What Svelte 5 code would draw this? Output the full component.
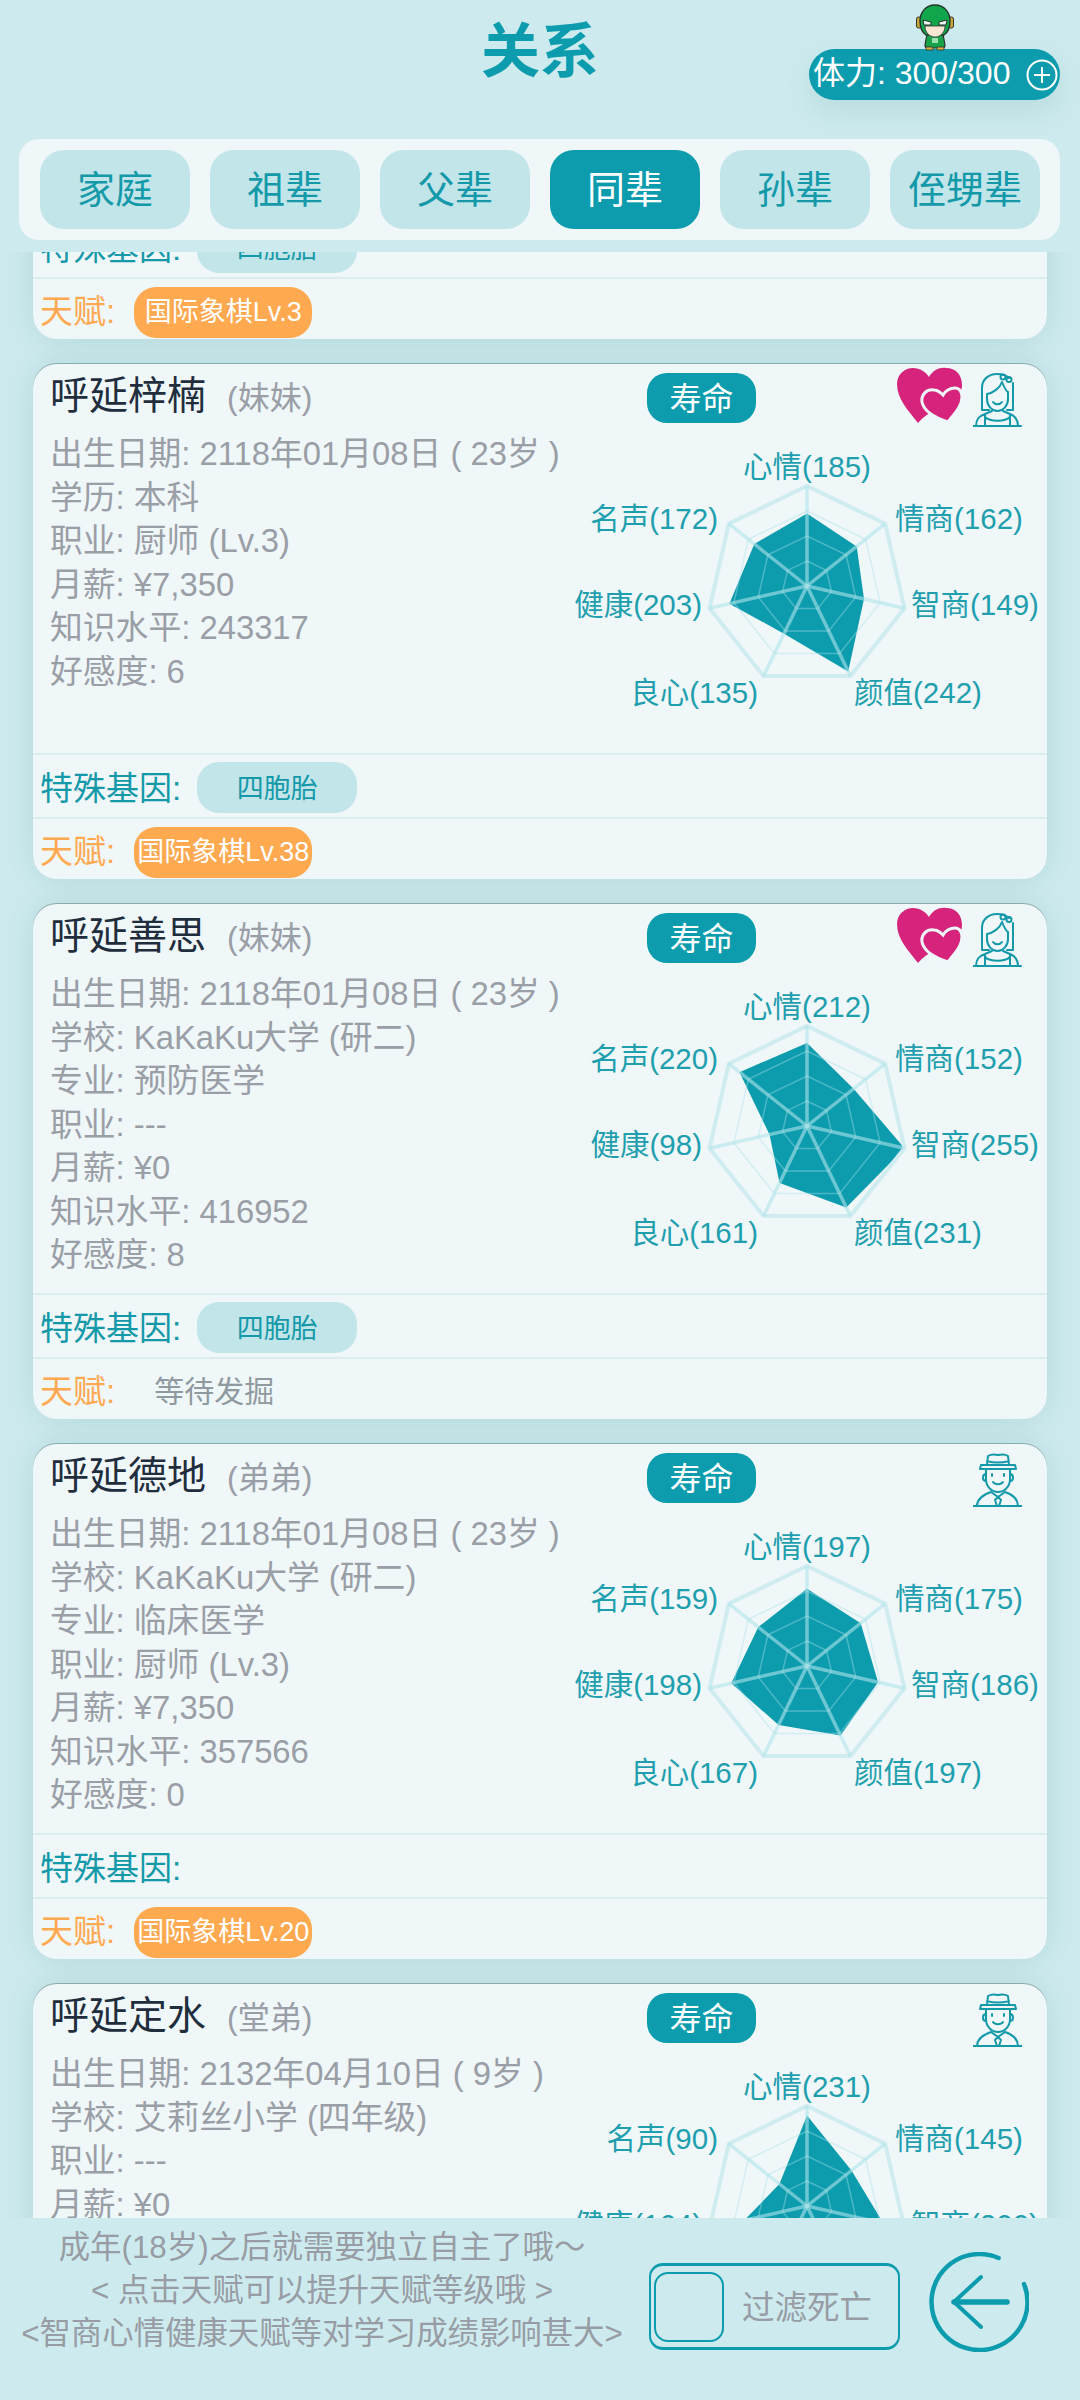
<script>
	const tabs = ['家庭', '祖辈', '父辈', '同辈', '孙辈', '侄甥辈'];
	const activeTab = '同辈';
	const tips = [
		'成年(18岁)之后就需要独立自主了哦～',
		'< 点击天赋可以提升天赋等级哦 >',
		'<智商心情健康天赋等对学习成绩影响甚大>'
	];

	// 雷达图: 顺时针七个属性, 标签位置相对 svg 左上角
	const R = 100;
	const CX = 247;
	const CY = 156;
	const axes = [
		{ key: '心情', x: 247, y: 38, anchor: 'middle' },
		{ key: '情商', x: 335, y: 90, anchor: 'start' },
		{ key: '智商', x: 351, y: 176, anchor: 'start' },
		{ key: '颜值', x: 294, y: 264, anchor: 'start' },
		{ key: '良心', x: 198, y: 264, anchor: 'end' },
		{ key: '健康', x: 142, y: 176, anchor: 'end' },
		{ key: '名声', x: 158, y: 90, anchor: 'end' }
	];

	function vertex(i, r) {
		const a = (i * 2 * Math.PI) / 7 - Math.PI / 2;
		return [CX + r * Math.cos(a), CY + r * Math.sin(a)];
	}

	function ring(scale) {
		return axes.map((_, i) => vertex(i, R * scale).map((n) => n.toFixed(1)).join(',')).join(' ');
	}

	function shape(values) {
		return values.map((v, i) => vertex(i, (v / 255) * R).map((n) => n.toFixed(1)).join(',')).join(' ');
	}

	const people = [
		{
			name: '',
			rel: '',
			lines: [],
			stats: null,
			icon: 'girl',
			married: false,
			gene: '四胞胎',
			talent: '国际象棋Lv.3'
		},
		{
			name: '呼延梓楠',
			rel: '(妹妹)',
			lines: [
				'出生日期: 2118年01月08日 ( 23岁 )',
				'学历: 本科',
				'职业: 厨师 (Lv.3)',
				'月薪: ¥7,350',
				'知识水平: 243317',
				'好感度: 6'
			],
			stats: [185, 162, 149, 242, 135, 203, 172],
			icon: 'girl',
			married: true,
			gene: '四胞胎',
			talent: '国际象棋Lv.38'
		},
		{
			name: '呼延善思',
			rel: '(妹妹)',
			lines: [
				'出生日期: 2118年01月08日 ( 23岁 )',
				'学校: KaKaKu大学 (研二)',
				'专业: 预防医学',
				'职业: ---',
				'月薪: ¥0',
				'知识水平: 416952',
				'好感度: 8'
			],
			stats: [212, 152, 255, 231, 161, 98, 220],
			icon: 'girl',
			married: true,
			gene: '四胞胎',
			talent: null
		},
		{
			name: '呼延德地',
			rel: '(弟弟)',
			lines: [
				'出生日期: 2118年01月08日 ( 23岁 )',
				'学校: KaKaKu大学 (研二)',
				'专业: 临床医学',
				'职业: 厨师 (Lv.3)',
				'月薪: ¥7,350',
				'知识水平: 357566',
				'好感度: 0'
			],
			stats: [197, 175, 186, 197, 167, 198, 159],
			icon: 'boy',
			married: false,
			gene: null,
			talent: '国际象棋Lv.20'
		},
		{
			name: '呼延定水',
			rel: '(堂弟)',
			lines: [
				'出生日期: 2132年04月10日 ( 9岁 )',
				'学校: 艾莉丝小学 (四年级)',
				'职业: ---',
				'月薪: ¥0'
			],
			stats: [231, 145, 200, 180, 120, 164, 90],
			icon: 'boy',
			married: false,
			gene: null,
			talent: null
		}
	];
</script>

<div class="page">
	<header class="top-bar">
		<h1>关系</h1>
		<div class="stamina">
			<svg class="mascot" width="38" height="47" viewBox="0 0 38 47">
				<rect x="0.5" y="13" width="5" height="11" rx="2" fill="#c9a93a" stroke="#333" stroke-width="1" />
				<rect x="32.5" y="13" width="5" height="11" rx="2" fill="#c9a93a" stroke="#333" stroke-width="1" />
				<path d="M11 30h16l2 11a3 3 0 0 1-3 3H12a3 3 0 0 1-3-3z" fill="#16a34a" stroke="#27332b" stroke-width="1.2" />
				<rect x="16" y="34" width="6" height="5" fill="#9ee0b0" />
				<path d="M10 43h7v3h-7zM21 43h7v3h-7z" fill="#d8b13a" stroke="#333" stroke-width="0.8" />
				<path d="M19 1C10 1 4 8 4 17c0 7 3 12 6 14h18c3-2 6-7 6-14 0-9-6-16-15-16z" fill="#12a64c" stroke="#26332b" stroke-width="1.4" />
				<path d="M9 22h20c0 6-4 11-10 11S9 28 9 22z" fill="#fbe6d2" stroke="#333" stroke-width="0.8" />
				<path d="M7 16l8 2v3H8zM31 16l-8 2v3h7z" fill="#eef5ee" stroke="#26332b" stroke-width="1" />
			</svg>
			<span class="stamina-text">体力: 300/300</span>
			<svg width="32" height="32" viewBox="0 0 32 32" fill="none" stroke="#fff">
				<circle cx="16" cy="16" r="14.5" stroke-width="2" />
				<path d="M16 8v16M8 16h16" stroke-width="2" />
			</svg>
		</div>
	</header>

	<nav class="tabs">
		{#each tabs as tab}
			<button class="tab" class:active={tab === activeTab}>{tab}</button>
		{/each}
	</nav>

	<main class="list">
		<div class="stack">
			{#each people as p}
				<article class="card">
					<div class="upper">
						<div class="head">
							<div class="who">
								<span class="name">{p.name}</span>
								<span class="rel">{p.rel}</span>
							</div>
							<button class="life">寿命</button>
							<div class="icons">
								{#if p.married}
									<svg class="hearts" width="65" height="56" viewBox="0 0 65 56">
										<path d="M21 56C11 43 0 32 0 17 0 7 8 1 16 1c7 0 13 4 16 9 4-7 11-10 17-9 10 0 16 7 16 17 0 12-13 18-25 24-8 4-14 8-19 14z" fill="#d6247c" />
										<path d="M51 55C42 52 27 46 25 35c-1-8 5-13 12-12 4 0 7 3 9 5 2-4 7-7 12-7 5 0 7 5 7 9 0 10-9 18-14 25z" fill="#d6247c" stroke="#eef7f9" stroke-width="3" />
									</svg>
								{/if}
								<svg class="person" width="49" height="54" viewBox="0 0 49 54" fill="none" stroke="#1499a9" stroke-width="2" stroke-linecap="round" stroke-linejoin="round">
									{#if p.icon === 'girl'}
										<path d="M9 37V15C9 6 16 1 24 1c5 0 9 1 12 4M40 10v27M9 37h7M40 37h-6" />
										<path d="M14 21c6-1 13-6 15-12 2 5 4 9 6 10v7c0 7-5 12-10.500 12S14 33 14 26z" />
										<path d="M20 29c2 3 7 3 9 0" />
										<circle cx="30" cy="4" r="2.500" />
										<circle cx="36" cy="6.500" r="2.500" />
										<path d="M0 53h48M3 53c0-7 3-10 9-12l7-3M45 53c0-7-3-10-8-12l-7-3M12 41v12M37 41v12M12 44c5 5 20 5 25 0" />
									{:else}
										<path d="M14 12l1-9c3-2 6-2 10-1 4-1 7-1 10 1l1 9M8 12h34l1 4H7zM14 8c7 2 15 2 22 0" />
										<path d="M13 17v9c0 8 6 13 12 13s12-5 12-13v-9M13 21c-4 0-4 7 0 7M37 21c4 0 4 7 0 7" />
										<path d="M20 29c2 3 8 3 10 0M19 21v2M31 21v2" />
										<path d="M0 53h49M4 53c0-7 5-11 14-14l7 5 7-5c9 3 13 7 13 14M25 44l-3 3 2 6M25 44l3 3-2 6" />
									{/if}
								</svg>
							</div>
						</div>
						<div class="body">
							<div class="info">
								{#each p.lines as line}
									<p>{line}</p>
								{/each}
							</div>
							{#if p.stats}
								<svg class="radar" width="487" height="300" viewBox="0 0 487 300">
									<polygon class="fill" points={shape(p.stats)} />
									{#each [0.25, 0.5, 0.75] as s}
										<polygon class="ring" points={ring(s)} />
									{/each}
									<polygon class="ring outer" points={ring(1)} />
									{#each axes as _, i}
										<line class="spoke" x1={CX} y1={CY} x2={vertex(i, R)[0]} y2={vertex(i, R)[1]} />
									{/each}
									{#each axes as a, i}
										<text x={a.x} y={a.y} dy="0.3em" text-anchor={a.anchor}>{a.key}({p.stats[i]})</text>
									{/each}
								</svg>
							{/if}
						</div>
					</div>
					<div class="row gene-row">
						<span class="label">特殊基因:</span>
						{#if p.gene}
							<span class="chip gene">{p.gene}</span>
						{/if}
					</div>
					<div class="row talent-row">
						<span class="label">天赋:</span>
						{#if p.talent}
							<span class="chip talent">{p.talent}</span>
						{:else}
							<span class="none">等待发掘</span>
						{/if}
					</div>
				</article>
			{/each}
		</div>
	</main>

	<footer class="bottom">
		<div class="tips">
			{#each tips as tip}
				<p>{tip}</p>
			{/each}
		</div>
		<label class="filter">
			<span class="box"></span>
			<span>过滤死亡</span>
		</label>
		<svg class="back" width="100" height="100" viewBox="0 0 100 100" fill="none" stroke="#0c9cae" stroke-linecap="round" stroke-linejoin="round">
			<path d="M69.600 6A48 48 0 1 0 95 32" stroke-width="4.500" />
			<path d="M52 25L25 50l27 25" stroke-width="4" />
			<path d="M25 50h53" stroke-width="5.500" />
		</svg>
	</footer>
</div>

<style>
	:global(body) {
		background: #cdebee;
	}

	.page {
		width: 1080px;
		height: 2400px;
		display: flex;
		flex-direction: column;
		overflow: hidden;
		background: #cdebee;
		font-family: 'Liberation Sans', 'Noto Sans CJK SC', sans-serif;
	}

	.top-bar {
		height: 139px;
		flex-shrink: 0;
		position: relative;
	}

	h1 {
		margin: 0;
		padding-top: 17px;
		text-align: center;
		font-size: 59px;
		line-height: 70px;
		font-weight: 700;
		color: #0c9cae;
	}

	.stamina {
		position: absolute;
		left: 809px;
		top: 49px;
		width: 251px;
		height: 51px;
		box-sizing: border-box;
		padding: 0 2px 0 4px;
		display: flex;
		align-items: center;
		justify-content: space-between;
		border-radius: 26px;
		background: #0c9cae;
		color: #fff;
		font-size: 32px;
		box-shadow: 0 12px 30px rgba(0, 90, 100, 0.1);
	}

	.stamina-text {
		padding-bottom: 10px;
	}

	.mascot {
		position: absolute;
		left: 107px;
		top: -45px;
	}

	.tabs {
		margin: 0 20px 0 19px;
		height: 101px;
		box-sizing: border-box;
		padding: 11px 20px 11px 21px;
		display: flex;
		gap: 20px;
		flex-shrink: 0;
		background: #eff7f9;
		border-radius: 20px;
	}

	.tab {
		flex: 0 0 150px;
		padding: 0 0 6px;
		border: none;
		border-radius: 24px;
		background: #c2e5e9;
		color: #1499a9;
		font-family: inherit;
		font-size: 38px;
	}

	.tab.active {
		background: #0c9cae;
		color: #fff;
	}

	.list {
		margin-top: 12px;
		height: 1966px;
		flex-shrink: 0;
		overflow: hidden;
	}

	.stack {
		margin-top: -428px;
		padding: 0 33px;
		display: flex;
		flex-direction: column;
		gap: 25px;
	}

	.card {
		height: 515px;
		flex-shrink: 0;
		display: flex;
		flex-direction: column;
		border-radius: 24px;
		background: #eff7f9;
		box-shadow:
			0 -1px 0 rgba(60, 90, 95, 0.4),
			0 0 30px rgba(0, 90, 100, 0.13);
	}

	.upper {
		height: 389px;
		flex-shrink: 0;
	}

	.head {
		height: 66px;
		box-sizing: border-box;
		padding: 9px 25px 0 17px;
		display: flex;
		align-items: flex-start;
	}

	.who {
		width: 597px;
		display: flex;
		align-items: baseline;
		gap: 21px;
		line-height: 46px;
	}

	.name {
		font-size: 39px;
		color: #1f2d3d;
	}

	.rel {
		font-size: 32px;
		color: #9a9ea6;
	}

	.life {
		width: 109px;
		height: 50px;
		padding: 0 0 4px;
		border: none;
		border-radius: 20px;
		background: #0c9cae;
		color: #fff;
		font-family: inherit;
		font-size: 32px;
	}

	.icons {
		margin-left: auto;
		margin-top: -6px;
		display: flex;
		align-items: flex-start;
		gap: 11px;
	}

	.person {
		margin-top: 6px;
	}

	.body {
		display: flex;
		align-items: flex-start;
	}

	.info {
		flex: 1;
		min-width: 0;
		padding: 2px 0 0 17px;
		white-space: nowrap;
		font-size: 32.8px;
		line-height: 43.5px;
		color: #9a9ea6;
	}

	.info p {
		margin: 0;
	}

	.radar {
		flex-shrink: 0;
	}

	.radar text {
		font-size: 29.5px;
		fill: #1f9fae;
	}

	.fill {
		fill: #0c9cae;
	}

	.ring {
		fill: none;
		stroke: rgb(170, 225, 232);
		stroke-opacity: 0.4;
		stroke-width: 1.5;
	}

	.ring.outer {
		stroke: #cfecf0;
		stroke-opacity: 1;
		stroke-width: 4;
	}

	.spoke {
		stroke: rgb(175, 228, 234);
		stroke-opacity: 0.6;
		stroke-width: 3.5;
	}

	.row {
		display: flex;
		align-items: center;
		box-sizing: border-box;
		padding-left: 7px;
		border-top: 2px solid #dcecef;
		font-size: 33px;
	}

	.gene-row {
		height: 64px;
		color: #1499a9;
	}

	.talent-row {
		height: 62px;
		color: #ffa950;
	}

	.chip {
		height: 51px;
		box-sizing: border-box;
		display: flex;
		align-items: center;
		justify-content: center;
		white-space: nowrap;
		font-size: 27px;
		border-radius: 22px;
	}

	.gene {
		margin: 3px 0 0 16px;
		padding-bottom: 3px;
		width: 160px;
		background: #c2e5e9;
		color: #1499a9;
	}

	.talent {
		margin: 6px 0 0 19px;
		padding-bottom: 6px;
		width: 178px;
		background: #ffa950;
		color: #fff;
	}

	.none {
		margin-left: 39px;
		font-size: 30px;
		color: #8f9aa0;
	}

	.bottom {
		flex: 1;
		position: relative;
		display: flex;
		align-items: flex-start;
	}

	.tips {
		width: 644px;
		padding-top: 8px;
		text-align: center;
		font-size: 31.4px;
		line-height: 43px;
		color: #989ca4;
	}

	.tips p {
		margin: 0;
		white-space: nowrap;
	}

	.filter {
		margin: 45px 0 0 5px;
		width: 251px;
		height: 87px;
		box-sizing: border-box;
		padding: 0 0 0 3px;
		display: flex;
		align-items: center;
		gap: 18px;
		border: 2px solid #0c9cae;
		border-top-width: 3px;
		border-bottom-width: 3px;
		border-radius: 14px;
		color: #989ca4;
		font-size: 32.5px;
	}

	.filter span:last-child {
		padding-bottom: 5px;
	}

	.box {
		width: 70px;
		height: 70px;
		box-sizing: border-box;
		border: 2.5px solid #0c9cae;
		border-radius: 14px;
	}

	.back {
		margin: 34px 0 0 29px;
	}
</style>
